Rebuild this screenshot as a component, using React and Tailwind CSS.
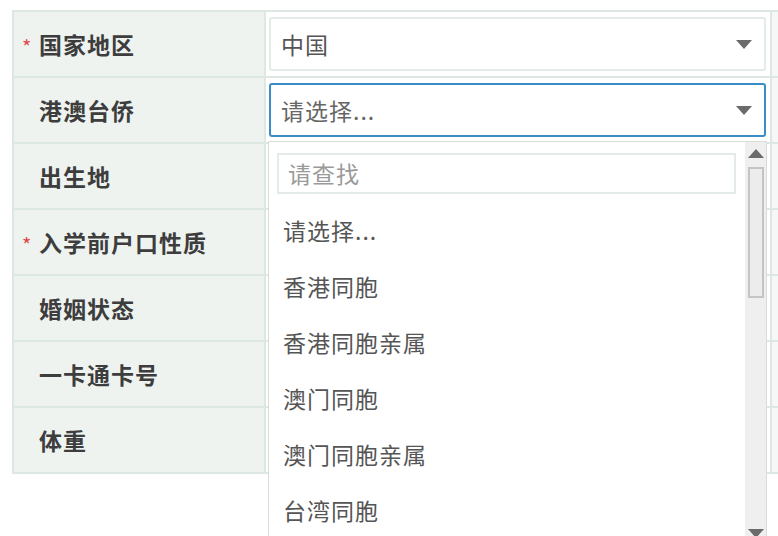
import React from 'react';

const rows = [
  { label: '国家地区', required: true },
  { label: '港澳台侨' },
  { label: '出生地' },
  { label: '入学前户口性质', required: true },
  { label: '婚姻状态' },
  { label: '一卡通卡号' },
  { label: '体重' },
];

const options = ['请选择...', '香港同胞', '香港同胞亲属', '澳门同胞', '澳门同胞亲属', '台湾同胞'];

const font = { fontFamily: '"Noto Sans CJK SC", "Noto Sans", sans-serif' };

function Caret() {
  return (
    <svg width="16" height="9" viewBox="0 0 16 9" className="shrink-0">
      <path d="M0 0 H16 L8 9 Z" fill="#6b6b6b" />
    </svg>
  );
}

function SelectBox({ value, placeholder, focused }) {
  return (
    <div
      className={`flex items-center justify-between h-[54px] pl-[10px] pr-[12px] rounded-[3px] bg-white ${
        focused ? 'border-2 border-[#3b8dc6]' : 'border-2 border-[#e4ece7]'
      }`}
    >
      <span className={`text-[23px] tracking-[1px] ${placeholder ? 'text-[#666]' : 'text-[#555]'}`}>{value}</span>
      <Caret />
    </div>
  );
}

function Dropdown() {
  return (
    <div className="absolute left-[268px] top-[141px] w-[499px] h-[400px] bg-white border border-[#d6ddd9] flex overflow-hidden">
      <div className="flex-1 flex flex-col">
        <div className="mt-[11px] ml-[8px] mr-[9px] h-[41px] border-2 border-[#e2ebe6] flex items-center pl-[9px]">
          <span className="text-[23px] tracking-[1px] text-[#9a9a9a]">请查找</span>
        </div>
        <div className="mt-[8px] flex flex-col">
          {options.map((o) => (
            <div key={o} className="h-[56px] flex items-center pl-[14px] text-[23px] tracking-[1px] text-[#555]">
              {o}
            </div>
          ))}
        </div>
      </div>
      <div className="w-[21px] bg-[#efefef] flex flex-col items-center pt-[7px] pb-[2px]">
        <svg width="16" height="9" viewBox="0 0 16 9">
          <path d="M0 9 H16 L8 0 Z" fill="#6b6b6b" />
        </svg>
        <div className="mt-[9px] w-[16px] h-[131px] bg-[#ececec] border-2 border-[#c4c4c4]" />
        <div className="flex-1" />
        <svg width="16" height="9" viewBox="0 0 16 9">
          <path d="M0 0 H16 L8 9 Z" fill="#6b6b6b" />
        </svg>
      </div>
    </div>
  );
}

export default function App() {
  return (
    <div className="relative w-[778px] h-[536px] overflow-hidden bg-white pt-[10px] pl-[12px]" style={font}>
      <table className="border-collapse table-fixed w-[800px]">
        <colgroup>
          <col className="w-[252px]" />
          <col className="w-[506px]" />
          <col className="w-[42px]" />
        </colgroup>
        <tbody>
          {rows.map((r, i) => (
            <tr key={r.label} className="h-[66px]">
              <td className="p-0 bg-[#eef3f0] border-2 border-[#dde8e2] align-middle">
                <div className="flex items-center pl-[8px]">
                  <span className="w-[17px] text-[20px] leading-none text-[#e04a4a] pt-[5px]">{r.required ? '*' : ''}</span>
                  <span className="text-[23px] tracking-[1px] font-semibold text-[#3d3d3d]">{r.label}</span>
                </div>
              </td>
              <td className="p-0 pl-[3px] pr-[4px] bg-white border-2 border-[#dde8e2] align-middle">
                {i === 0 && <SelectBox value="中国" />}
                {i === 1 && <SelectBox value="请选择..." placeholder focused />}
              </td>
              <td className="p-0 bg-[#f6f8f7] border-2 border-[#dde8e2]" />
            </tr>
          ))}
        </tbody>
      </table>
      <Dropdown />
    </div>
  );
}
